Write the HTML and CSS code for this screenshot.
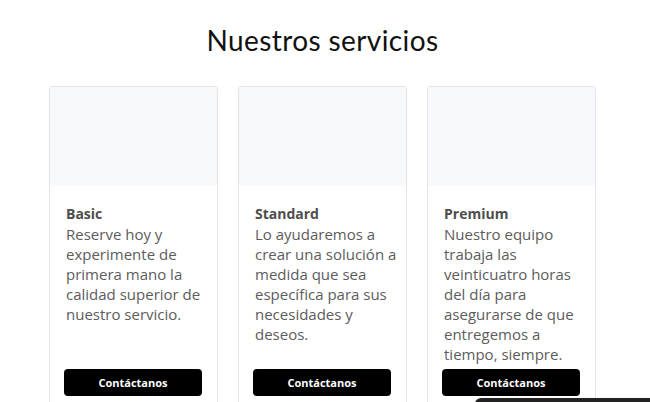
FILE: index.html
```html
<!DOCTYPE html>
<html lang="es">
<head>
<meta charset="utf-8">
<link rel="stylesheet" href="styles.css">
</head>
<body>
<section class="services">
  <h2 class="services-title">Nuestros servicios</h2>
  <div class="cards">
    <div class="card">
      <div class="card-media"></div>
      <div class="card-body">
        <div class="card-text">
          <h3 class="card-name">Basic</h3>
          <p class="card-desc">Reserve hoy y experimente de primera mano la calidad superior de nuestro servicio.</p>
        </div>
        <button class="card-btn">Contáctanos</button>
      </div>
    </div>
    <div class="card">
      <div class="card-media"></div>
      <div class="card-body">
        <div class="card-text">
          <h3 class="card-name">Standard</h3>
          <p class="card-desc">Lo ayudaremos a crear una solución a medida que sea específica para sus necesidades y deseos.</p>
        </div>
        <button class="card-btn">Contáctanos</button>
      </div>
    </div>
    <div class="card">
      <div class="card-media"></div>
      <div class="card-body">
        <div class="card-text">
          <h3 class="card-name">Premium</h3>
          <p class="card-desc">Nuestro equipo trabaja las veinticuatro horas del día para asegurarse de que entregemos a tiempo, siempre.</p>
        </div>
        <button class="card-btn">Contáctanos</button>
      </div>
    </div>
  </div>
</section>
<div class="chat-bar"></div>
</body>
</html>
```

FILE: styles.css
```css
html, body {
  margin: 0;
  padding: 0;
  background: #ffffff;
  overflow: hidden;
}
body {
  width: 650px;
  height: 402px;
  position: relative;
  font-family: "Open Sans", "Liberation Sans", sans-serif;
}
.services {
  padding: 22px 0 0 49px;
}
.services-title {
  margin: 0;
  width: 547px;
  text-align: center;
  font-family: "Lato", "Open Sans", sans-serif;
  font-weight: 400;
  font-size: 28px;
  line-height: 36px;
  color: #111111;
  letter-spacing: 0.4px;
}
.cards {
  display: grid;
  grid-template-columns: 169px 169px 169px;
  column-gap: 20px;
  margin-top: 28px;
  align-items: stretch;
}
.card {
  border: 1px solid #e4e4e6;
  border-radius: 3px;
  display: flex;
  flex-direction: column;
  background: #fff;
}
.card-media {
  height: 99px;
  background: #f7f9fd;
  border-radius: 2px 2px 0 0;
}
.card-body {
  flex: 1;
  display: flex;
  flex-direction: column;
  padding: 18px 9px 16px 16px;
}
.card-text {
  flex: 1;
}
.card-name {
  margin: 0;
  font-size: 14px;
  line-height: 20px;
  font-weight: 700;
  color: #4d4d4d;
}
.card-desc {
  margin: 0;
  font-size: 15px;
  line-height: 20px;
  color: #5c5c5c;
}
.card-btn {
  margin: 5px 0 0 -2px;
  width: 138px;
  height: 27px;
  border: none;
  border-radius: 4px;
  background: #000;
  color: #fff;
  font-family: "Open Sans", "Liberation Sans", sans-serif;
  font-weight: 700;
  font-size: 11px;
  line-height: 25px;
  padding: 0;
  cursor: pointer;
}
.chat-bar {
  position: absolute;
  left: 475px;
  top: 398px;
  width: 180px;
  height: 20px;
  background: #222222;
  border-radius: 6px 0 0 0;
}
```
